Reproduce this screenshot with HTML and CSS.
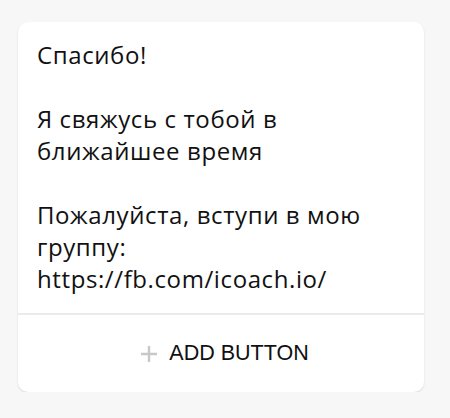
FILE: index.html
```html
<!DOCTYPE html>
<html lang="ru">
<head>
<meta charset="utf-8">
<link rel="stylesheet" href="styles.css">
</head>
<body>
<div class="card">
  <div class="message">
    <p>Спасибо!</p>
    <p class="blank">&nbsp;</p>
    <p>Я свяжусь с тобой в ближайшее время</p>
    <p class="blank">&nbsp;</p>
    <p>Пожалуйста, вступи в мою группу: https://fb.com/icoach.io/</p>
  </div>
  <div class="add-button">
    <svg class="plus" width="18" height="18" viewBox="0 0 18 18"><path d="M9 1v16M1 9h16" stroke="#c8c8c8" stroke-width="2.4"/></svg>
    <span class="label">ADD BUTTON</span>
  </div>
</div>
</body>
</html>
```
FILE: styles.css
```css
html, body {
  margin: 0;
  padding: 0;
  background: #f7f7f7;
}
body {
  padding: 22px 26px 0 18px;
}
.card {
  background: #fff;
  border-radius: 10px;
  box-shadow: 0 1px 2px rgba(0,0,0,0.12);
  overflow: hidden;
}
.message {
  padding: 17px 18px 18px 19px;
  font-family: "Open Sans", sans-serif;
  font-size: 24px;
  letter-spacing: 0.6px;
  line-height: 32px;
  color: #111;
}
.message p {
  margin: 0;
}
.add-button {
  border-top: 2px solid #ebebeb;
  height: 77px;
  padding-left: 7px;
  display: flex;
  align-items: center;
  justify-content: center;
  gap: 11px;
  font-family: "Liberation Sans", Arial, sans-serif;
  font-size: 21.5px;
  color: #111;
}
.plus {
  display: block;
}
```
